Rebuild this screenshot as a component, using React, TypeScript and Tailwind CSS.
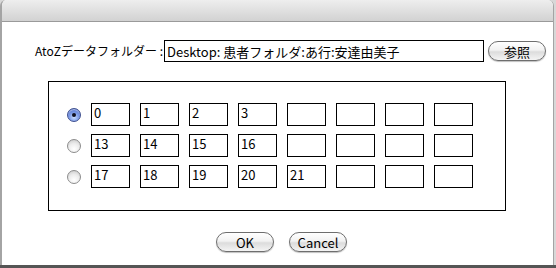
const rows = [
  ["0", "1", "2", "3", "", "", "", ""],
  ["13", "14", "15", "16", "", "", "", ""],
  ["17", "18", "19", "20", "21", "", "", ""],
];

function Radio({ checked }: { checked?: boolean }) {
  if (checked) {
    return (
      <div className="w-[14px] h-[14px] rounded-full border border-[#3d4f8f] bg-[radial-gradient(circle_at_50%_70%,#c8dcff_0%,#7d9ce8_45%,#3553b8_100%)] flex items-center justify-center shadow-[inset_0_1px_1px_rgba(255,255,255,0.6)]">
        <div className="w-[4px] h-[4px] rounded-full bg-[#101020]" />
      </div>
    );
  }
  return (
    <div className="w-[14px] h-[14px] rounded-full border border-[#8c8c8c] bg-[radial-gradient(circle_at_50%_75%,#ffffff_0%,#ececec_50%,#c4c4c4_100%)]" />
  );
}

function AquaButton({ label, w }: { label: string; w: string }) {
  return (
    <div
      className={`${w} h-[20px] rounded-full border border-[#6e6e6e] bg-[linear-gradient(to_bottom,#ffffff_0%,#f2f2f2_45%,#dcdcdc_55%,#f4f4f4_100%)] shadow-[0_1px_1px_rgba(0,0,0,0.25)] flex items-center justify-center text-[13px] text-black leading-none`}
    >
      {label}
    </div>
  );
}

export default function App() {
  return (
    <div
      className="w-[556px] h-[268px] bg-[#d8d8d8] flex flex-col overflow-hidden"
      style={{ fontFamily: '"Noto Sans CJK JP", "DejaVu Sans", sans-serif' }}
    >
      <div className="w-[554px] h-[265px] bg-white rounded-t-[6px] border-l-2 border-r border-[#a4a4a4] flex flex-col overflow-hidden">
        <div className="h-[22px] shrink-0 bg-[linear-gradient(to_bottom,#eeeeee,#d2d2d2)] border-b border-[#9a9a9a]" />

        <div className="flex items-center pt-[18px] pl-[33px]">
          <span className="text-[12px] text-black leading-none">AtoZデータフォルダー :</span>
          <div className="ml-[1px] w-[320px] h-[22px] border border-black flex items-center pl-[2px] text-[13px] leading-none text-black">
            Desktop: 患者フォルダ:あ行:安達由美子
          </div>
          <div className="ml-[4px]">
            <AquaButton label="参照" w="w-[58px]" />
          </div>
        </div>

        <div className="ml-[46px] mt-[19px] w-[458px] h-[130px] border border-black flex flex-col gap-[8px] pt-[21px] pl-[18px]">
          {rows.map((row, i) => (
            <div key={i} className="flex items-center">
              <Radio checked={i === 0} />
              <div className="ml-[10px] flex gap-[10px]">
                {row.map((v, j) => (
                  <div
                    key={j}
                    className="w-[39px] h-[23px] border border-black pl-[2px] pt-[2px] text-[13px] leading-none text-black"
                  >
                    {v}
                  </div>
                ))}
              </div>
            </div>
          ))}
        </div>

        <div className="flex justify-center gap-[15px] pl-[8px] mt-[21px]">
          <AquaButton label="OK" w="w-[58px]" />
          <AquaButton label="Cancel" w="w-[58px]" />
        </div>
      </div>
      <div className="flex-1 bg-[#555555]" />
    </div>
  );
}
